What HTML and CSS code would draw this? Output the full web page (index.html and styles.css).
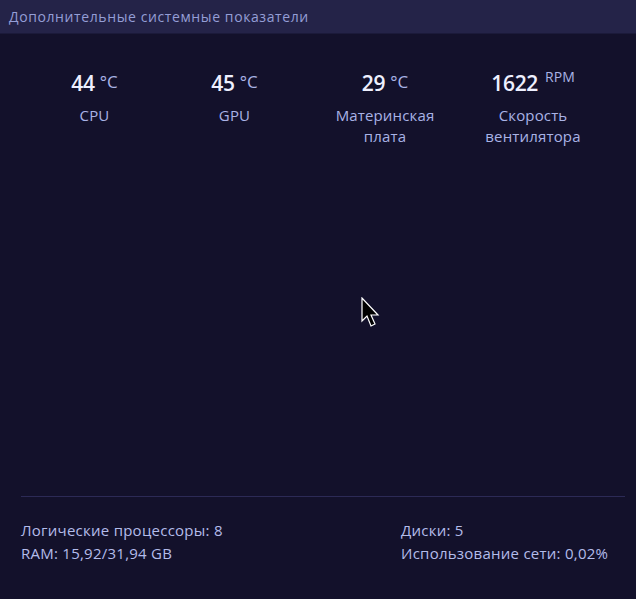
FILE: index.html
```html
<!DOCTYPE html>
<html lang="ru">
<head>
    <meta charset="UTF-8">
    <title>Дополнительные системные показатели</title>
    <link rel="stylesheet" href="styles.css">
</head>
<body>
    <div class="panel">
        <div class="panel-header">Дополнительные системные показатели</div>

        <div class="panel-body">
            <div class="sensors">
                <div class="sensor">
                    <div class="sensor-value">44<span class="unit">°C</span></div>
                    <div class="sensor-label">CPU</div>
                </div>
                <div class="sensor">
                    <div class="sensor-value">45<span class="unit">°C</span></div>
                    <div class="sensor-label">GPU</div>
                </div>
                <div class="sensor">
                    <div class="sensor-value">29<span class="unit">°C</span></div>
                    <div class="sensor-label">Материнская<br>плата</div>
                </div>
                <div class="sensor">
                    <div class="sensor-value">1622<span class="unit unit-small">RPM</span></div>
                    <div class="sensor-label">Скорость<br>вентилятора</div>
                </div>
            </div>

            <div class="spacer"></div>

            <div class="summary">
                <div class="summary-col">
                    <div>Логические процессоры: 8</div>
                    <div>RAM: 15,92/31,94 GB</div>
                </div>
                <div class="summary-col">
                    <div>Диски: 5</div>
                    <div>Использование сети: 0,02%</div>
                </div>
            </div>
        </div>

        <svg class="cursor" width="22" height="34" viewBox="0 0 22 34">
            <path d="M1 1 L1 24 L6 19 L10 29 L14 27 L10 18 L17 18 Z" fill="#000" stroke="#fff" stroke-width="1.2" stroke-linejoin="miter"/>
        </svg>
    </div>
</body>
</html>
```

FILE: styles.css
```css
* {
    margin: 0;
    padding: 0;
    box-sizing: border-box;
}

html, body {
    height: 100%;
}

body {
    font-family: 'Open Sans', 'Noto Sans', sans-serif;
    background: #13112b;
    color: #a9b3e6;
}

.panel {
    position: relative;
    height: 100%;
    display: flex;
    flex-direction: column;
}

.panel-header {
    height: 34px;
    padding: 7px 9px 0;
    background: #242348;
    border-bottom: 1px solid #1b1a3a;
    color: #949ed6;
    font-size: 14px;
    letter-spacing: 0.6px;
    white-space: nowrap;
}

.panel-body {
    flex: 1;
    display: flex;
    flex-direction: column;
    padding: 36px 11px 0 21px;
}

.sensors {
    display: grid;
    grid-template-columns: 147px 133px 168px 128px;
    text-align: center;
}

.sensor-value {
    color: #eef0ff;
    font-size: 21px;
    font-weight: 600;
    line-height: 26px;
    letter-spacing: -0.3px;
}

.unit {
    font-size: 17px;
    font-weight: 400;
    line-height: 0;
    color: #a9b3e6;
    margin-left: 5px;
    vertical-align: 3px;
    letter-spacing: 0;
}

.unit-small {
    font-size: 14px;
    vertical-align: 9px;
    margin-left: 7px;
}

.sensor-label {
    margin-top: 9px;
    font-size: 15px;
    line-height: 21px;
    letter-spacing: 0.15px;
    color: #a9b3e6;
}

.spacer {
    flex: 1;
}

.summary {
    border-top: 1px solid #2c2a56;
    padding: 22px 0 34px;
    display: grid;
    grid-template-columns: 380px 1fr;
    font-size: 15px;
    line-height: 23px;
    letter-spacing: 0.25px;
    color: #b3bcea;
}

.cursor {
    position: absolute;
    left: 361px;
    top: 297px;
}
```
